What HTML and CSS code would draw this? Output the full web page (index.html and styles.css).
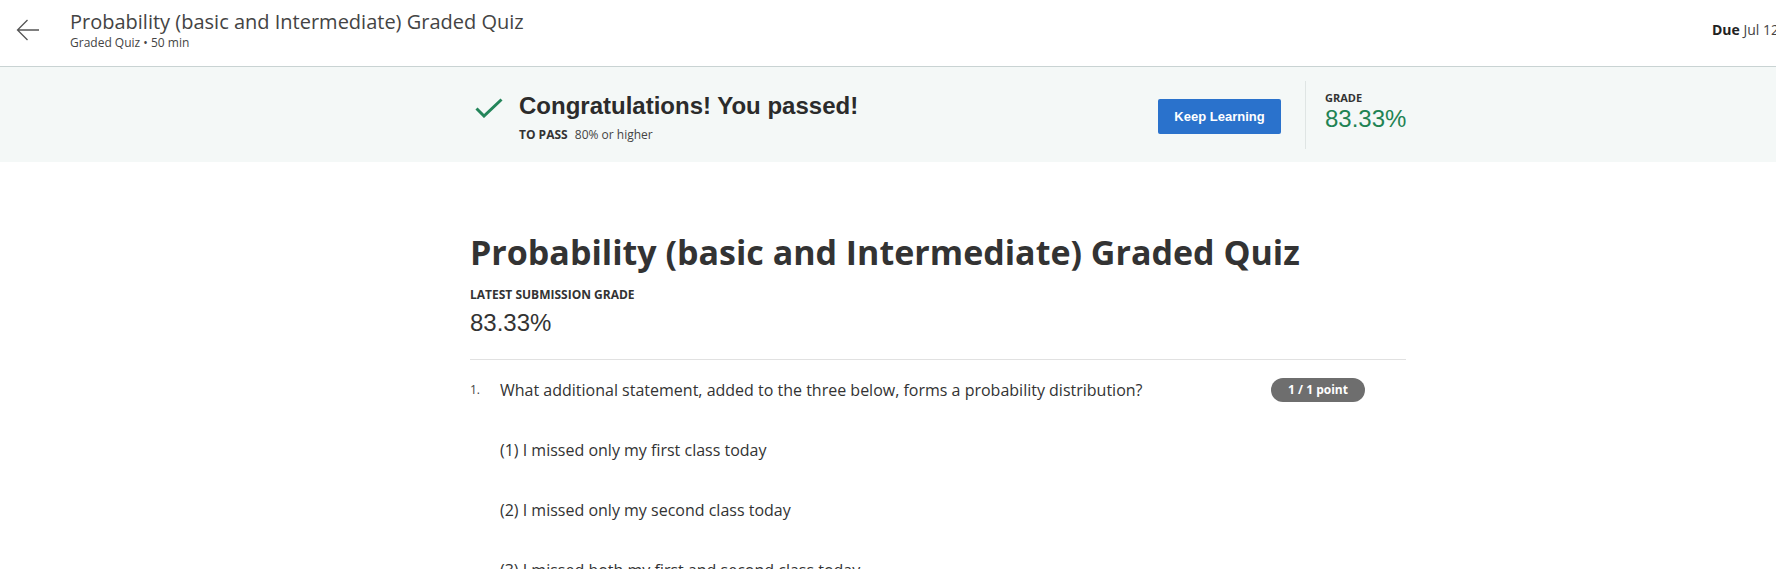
FILE: index.html
```html
<!DOCTYPE html>
<html lang="en">
<head>
<meta charset="utf-8">
<title>Probability (basic and Intermediate) Graded Quiz</title>
<link rel="stylesheet" href="styles.css">
</head>
<body>
<div class="page">
  <header class="topbar">
    <button class="back" aria-label="Back">
      <svg width="24" height="22" viewBox="0 0 24 22"><path d="M23 11H1.5M11.5 1L1.5 11l10 10" fill="none" stroke="#555" stroke-width="1.3"/></svg>
    </button>
    <div class="crumb">
      <div class="crumb-title">Probability (basic and Intermediate) Graded Quiz</div>
      <div class="crumb-sub">Graded Quiz • 50 min</div>
    </div>
    <div class="due"><b>Due</b> Jul 12</div>
  </header>

  <section class="banner">
    <div class="col banner-inner">
      <div class="pass">
        <svg class="check" width="28" height="20" viewBox="0 0 28 20"><path d="M1.5 10.5l7.5 7.5L26.5 1.5" fill="none" stroke="#23855a" stroke-width="3"/></svg>
        <div>
          <div class="congrats">Congratulations! You passed!</div>
          <div class="topass"><b>TO PASS</b> 80% or higher</div>
        </div>
      </div>
      <button class="keep">Keep Learning</button>
      <div class="vdiv"></div>
      <div class="grade">
        <div class="grade-label">GRADE</div>
        <div class="grade-value">83.33%</div>
      </div>
    </div>
  </section>

  <main class="col content">
    <h1 class="quiz-title">Probability (basic and Intermediate) Graded Quiz</h1>
    <div class="latest-label">LATEST SUBMISSION GRADE</div>
    <div class="latest-value">83.33%</div>
    <div class="rule"></div>
    <div class="question">
      <div class="qnum">1.</div>
      <div class="qbody">
        <p class="qtext">What additional statement, added to the three below, forms a probability distribution?</p>
        <p class="opt">(1) I missed only my first class today</p>
        <p class="opt">(2) I missed only my second class today</p>
        <p class="opt">(3) I missed both my first and second class today</p>
      </div>
      <div class="points">1 / 1 point</div>
    </div>
  </main>
</div>
</body>
</html>
```

FILE: styles.css
```css
html, body {
  margin: 0;
  padding: 0;
  overflow: hidden;
  background: #fff;
}
body {
  font-family: "Open Sans", "Liberation Sans", sans-serif;
  color: #333;
}
.page {
  width: 1876px;
}
.topbar {
  height: 66px;
  border-bottom: 1px solid #c9d3d3;
  display: flex;
  align-items: center;
  padding: 0 97px 0 0;
}
.back {
  width: 70px;
  height: 66px;
  border: 0;
  background: none;
  padding: 0 0 6px 16px;
  display: flex;
  align-items: center;
  cursor: pointer;
}
.crumb {
  flex: 1;
  padding-bottom: 8px;
}
.crumb-title {
  font-size: 20px;
  line-height: 26px;
  color: #444;
}
.crumb-sub {
  font-size: 12px;
  line-height: 14px;
  color: #444;
  margin-top: 1px;
}
.due {
  font-size: 14px;
  color: #444;
  white-space: nowrap;
  padding-bottom: 8px;
}
.due b { color: #222; }
.col {
  width: 936px;
  margin-left: 470px;
}
.banner {
  background: #f4f8f7;
  height: 95px;
  display: flex;
  align-items: center;
}
.banner-inner {
  display: flex;
  align-items: center;
}
.pass {
  flex: 1;
  display: flex;
  align-items: flex-start;
  padding-top: 5px;
}
.check {
  margin: 6px 16px 0 5px;
}
.congrats {
  font-family: "Liberation Sans", Arial, sans-serif;
  font-weight: bold;
  font-size: 24px;
  line-height: 28px;
  color: #2b2b2b;
}
.topass {
  font-size: 12px;
  line-height: 16px;
  margin-top: 7px;
  color: #444;
}
.topass b {
  color: #333;
  margin-right: 4px;
}
.keep {
  width: 123px;
  height: 35px;
  background: #2a72cc;
  color: #fff;
  border: 0;
  border-radius: 2px;
  font-family: "Liberation Sans", Arial, sans-serif;
  font-weight: bold;
  font-size: 13px;
  margin-top: 4px;
  padding: 0;
}
.vdiv {
  width: 1px;
  height: 68px;
  background: #dfe5e4;
  margin: 0 19px 0 24px;
}
.grade {
  width: 81px;
  padding-bottom: 6px;
}
.grade-label {
  font-size: 11px;
  font-weight: bold;
  line-height: 14px;
  color: #333;
  margin-top: -1px;
}
.grade-value {
  font-family: "Liberation Sans", Arial, sans-serif;
  font-size: 24px;
  line-height: 26px;
  color: #1f8354;
  margin-top: 1px;
}
.content {
  padding-top: 69px;
}
.quiz-title {
  margin: 0;
  font-size: 34px;
  line-height: 42px;
  font-weight: bold;
  color: #333;
}
.latest-label {
  margin-top: 14px;
  font-size: 12px;
  line-height: 16px;
  font-weight: bold;
  color: #333;
}
.latest-value {
  margin-top: 6px;
  font-family: "Liberation Sans", Arial, sans-serif;
  font-size: 24px;
  line-height: 28px;
  color: #333;
}
.rule {
  margin-top: 22px;
  height: 1px;
  background: #e1e1e1;
}
.question {
  display: flex;
  padding-top: 18px;
}
.qnum {
  width: 30px;
  font-size: 12px;
  line-height: 24px;
  color: #444;
}
.qbody {
  flex: 1;
}
.qbody p {
  margin: 0;
  font-size: 16px;
  line-height: 24px;
  color: #333;
}
.qbody p.opt {
  margin-top: 36px;
}
.points {
  width: 94px;
  height: 24px;
  border-radius: 12px;
  background: #6e6e6e;
  color: #fff;
  font-size: 12px;
  font-weight: bold;
  line-height: 24px;
  text-align: center;
  margin-right: 41px;
  margin-top: 0;
}
```
